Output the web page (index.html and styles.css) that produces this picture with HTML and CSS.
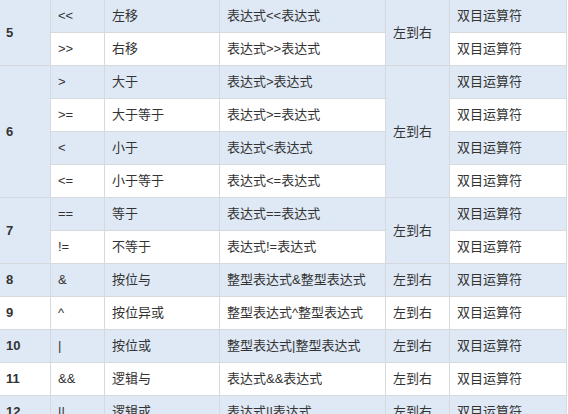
FILE: index.html
```html
<!DOCTYPE html>
<html lang="zh">
<head>
<meta charset="utf-8">
<title>运算符优先级</title>
<link rel="stylesheet" href="styles.css">
</head>
<body>
<table class="reference">
  <colgroup>
    <col class="c1"><col class="c2"><col class="c3"><col class="c4"><col class="c5"><col class="c6">
  </colgroup>
  <tbody>
    <tr><td rowspan="2" class="num">5</td><td>&lt;&lt;</td><td>左移</td><td>表达式&lt;&lt;表达式</td><td rowspan="2">左到右</td><td>双目运算符</td></tr>
    <tr><td>&gt;&gt;</td><td>右移</td><td>表达式&gt;&gt;表达式</td><td>双目运算符</td></tr>
    <tr><td rowspan="4" class="num">6</td><td>&gt;</td><td>大于</td><td>表达式&gt;表达式</td><td rowspan="4">左到右</td><td>双目运算符</td></tr>
    <tr><td>&gt;=</td><td>大于等于</td><td>表达式&gt;=表达式</td><td>双目运算符</td></tr>
    <tr><td>&lt;</td><td>小于</td><td>表达式&lt;表达式</td><td>双目运算符</td></tr>
    <tr><td>&lt;=</td><td>小于等于</td><td>表达式&lt;=表达式</td><td>双目运算符</td></tr>
    <tr><td rowspan="2" class="num">7</td><td>==</td><td>等于</td><td>表达式==表达式</td><td rowspan="2">左到右</td><td>双目运算符</td></tr>
    <tr><td>!=</td><td>不等于</td><td>表达式!=表达式</td><td>双目运算符</td></tr>
    <tr><td class="num">8</td><td>&amp;</td><td>按位与</td><td>整型表达式&amp;整型表达式</td><td>左到右</td><td>双目运算符</td></tr>
    <tr><td class="num">9</td><td>^</td><td>按位异或</td><td>整型表达式^整型表达式</td><td>左到右</td><td>双目运算符</td></tr>
    <tr><td class="num">10</td><td>|</td><td>按位或</td><td>整型表达式|整型表达式</td><td>左到右</td><td>双目运算符</td></tr>
    <tr><td class="num">11</td><td>&amp;&amp;</td><td>逻辑与</td><td>表达式&amp;&amp;表达式</td><td>左到右</td><td>双目运算符</td></tr>
    <tr><td class="num">12</td><td>||</td><td>逻辑或</td><td>表达式||表达式</td><td>左到右</td><td>双目运算符</td></tr>
    <tr><td class="num">13</td><td>!</td><td>逻辑非</td><td>!表达式</td><td>右到左</td><td>单目运算符</td></tr>
  </tbody>
</table>
</body>
</html>
```

FILE: styles.css
```css
html, body {
  margin: 0;
  padding: 0;
  background: #ffffff;
  overflow: hidden;
}

.reference {
  border-collapse: collapse;
  table-layout: fixed;
  width: 567px;
  margin: -1px 0 0 -1px;
  font-family: "Liberation Sans", "Noto Sans CJK SC", sans-serif;
  font-size: 13px;
  color: #333333;
}

.reference col.c1 { width: 51px; }
.reference col.c2 { width: 54px; }
.reference col.c3 { width: 115px; }
.reference col.c4 { width: 166px; }
.reference col.c5 { width: 64px; }
.reference col.c6 { width: 117px; }

.reference tr:nth-child(odd) {
  background: #dfe9f5;
}

.reference tr:nth-child(even) {
  background: #ffffff;
}

.reference td {
  border: 1px solid #d6d9dd;
  padding: 8px 6px 8px 7px;
  line-height: 16px;
  height: 16px;
  white-space: nowrap;
  vertical-align: middle;
  overflow: hidden;
}

.reference td.num {
  font-weight: bold;
  padding-left: 6px;
}
```
